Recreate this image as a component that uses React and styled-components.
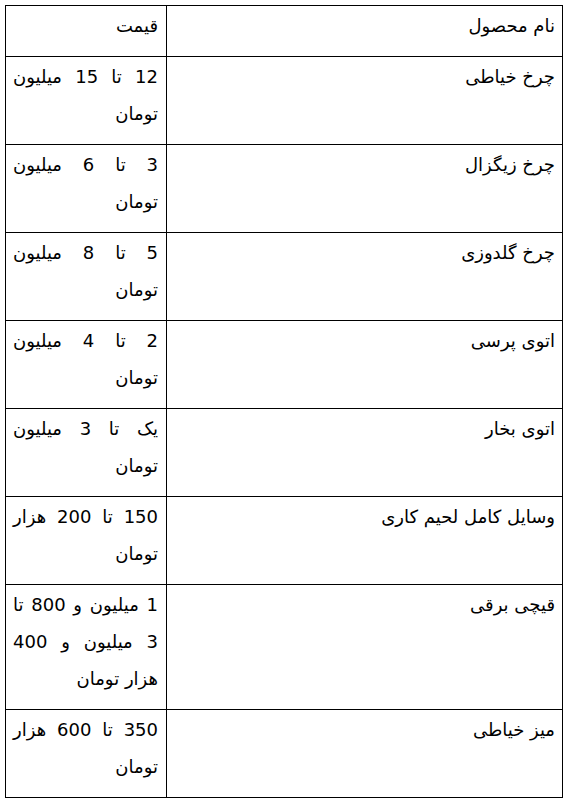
import React from 'react';
import styled, { createGlobalStyle } from 'styled-components';

const GlobalStyle = createGlobalStyle`
  html, body {
    margin: 0;
    padding: 0;
    background: #ffffff;
  }
  body {
    font-family: "DejaVu Sans", Tahoma, sans-serif;
    color: #000000;
  }
`;

const Page = styled.div`
  padding: 5px 8px 0 7px;
  direction: rtl;
`;

const Table = styled.table`
  width: 556px;
  border-collapse: collapse;
  table-layout: fixed;
  font-size: 18px;
  line-height: 37px;
`;

const Cell = styled.td`
  border: 1px solid #000;
  vertical-align: top;
  padding: ${props => (props.wide ? '1px 7px 12px 8px' : '1px 8px 12px 7px')};
  width: ${props => (props.wide ? '380px' : '145px')};
  height: ${props => props.lines * 37}px;
  text-align: right;
  overflow: hidden;
`;

const Line = styled.div`
  text-align: ${props => (props.last ? 'right' : 'justify')};
  text-align-last: ${props => (props.last ? 'right' : 'justify')};
  white-space: nowrap;
`;

const rows = [
  { name: 'چرخ خیاطی', price: ['12 تا 15 میلیون', 'تومان'] },
  { name: 'چرخ زیگزال', price: ['3 تا 6 میلیون', 'تومان'] },
  { name: 'چرخ گلدوزی', price: ['5 تا 8 میلیون', 'تومان'] },
  { name: 'اتوی پرسی', price: ['2 تا 4 میلیون', 'تومان'] },
  { name: 'اتوی بخار', price: ['یک تا 3 میلیون', 'تومان'] },
  { name: 'وسایل کامل لحیم کاری', price: ['150 تا 200 هزار', 'تومان'] },
  { name: 'قیچی برقی', price: ['1 میلیون و 800 تا', '3 میلیون و 400', 'هزار تومان'] },
  { name: 'میز خیاطی', price: ['350 تا 600 هزار', 'تومان'] },
];

function PriceCell({ lines }) {
  return (
    <Cell lines={lines.length}>
      {lines.map((text, i) => (
        <Line key={i} last={i === lines.length - 1}>
          {text}
        </Line>
      ))}
    </Cell>
  );
}

export default function App() {
  return (
    <>
      <GlobalStyle />
      <Page>
        <Table>
          <tbody>
            <tr>
              <Cell wide lines={1}>نام محصول</Cell>
              <Cell lines={1}>قیمت</Cell>
            </tr>
            {rows.map(row => (
              <tr key={row.name}>
                <Cell wide lines={row.price.length}>{row.name}</Cell>
                <PriceCell lines={row.price} />
              </tr>
            ))}
          </tbody>
        </Table>
      </Page>
    </>
  );
}
